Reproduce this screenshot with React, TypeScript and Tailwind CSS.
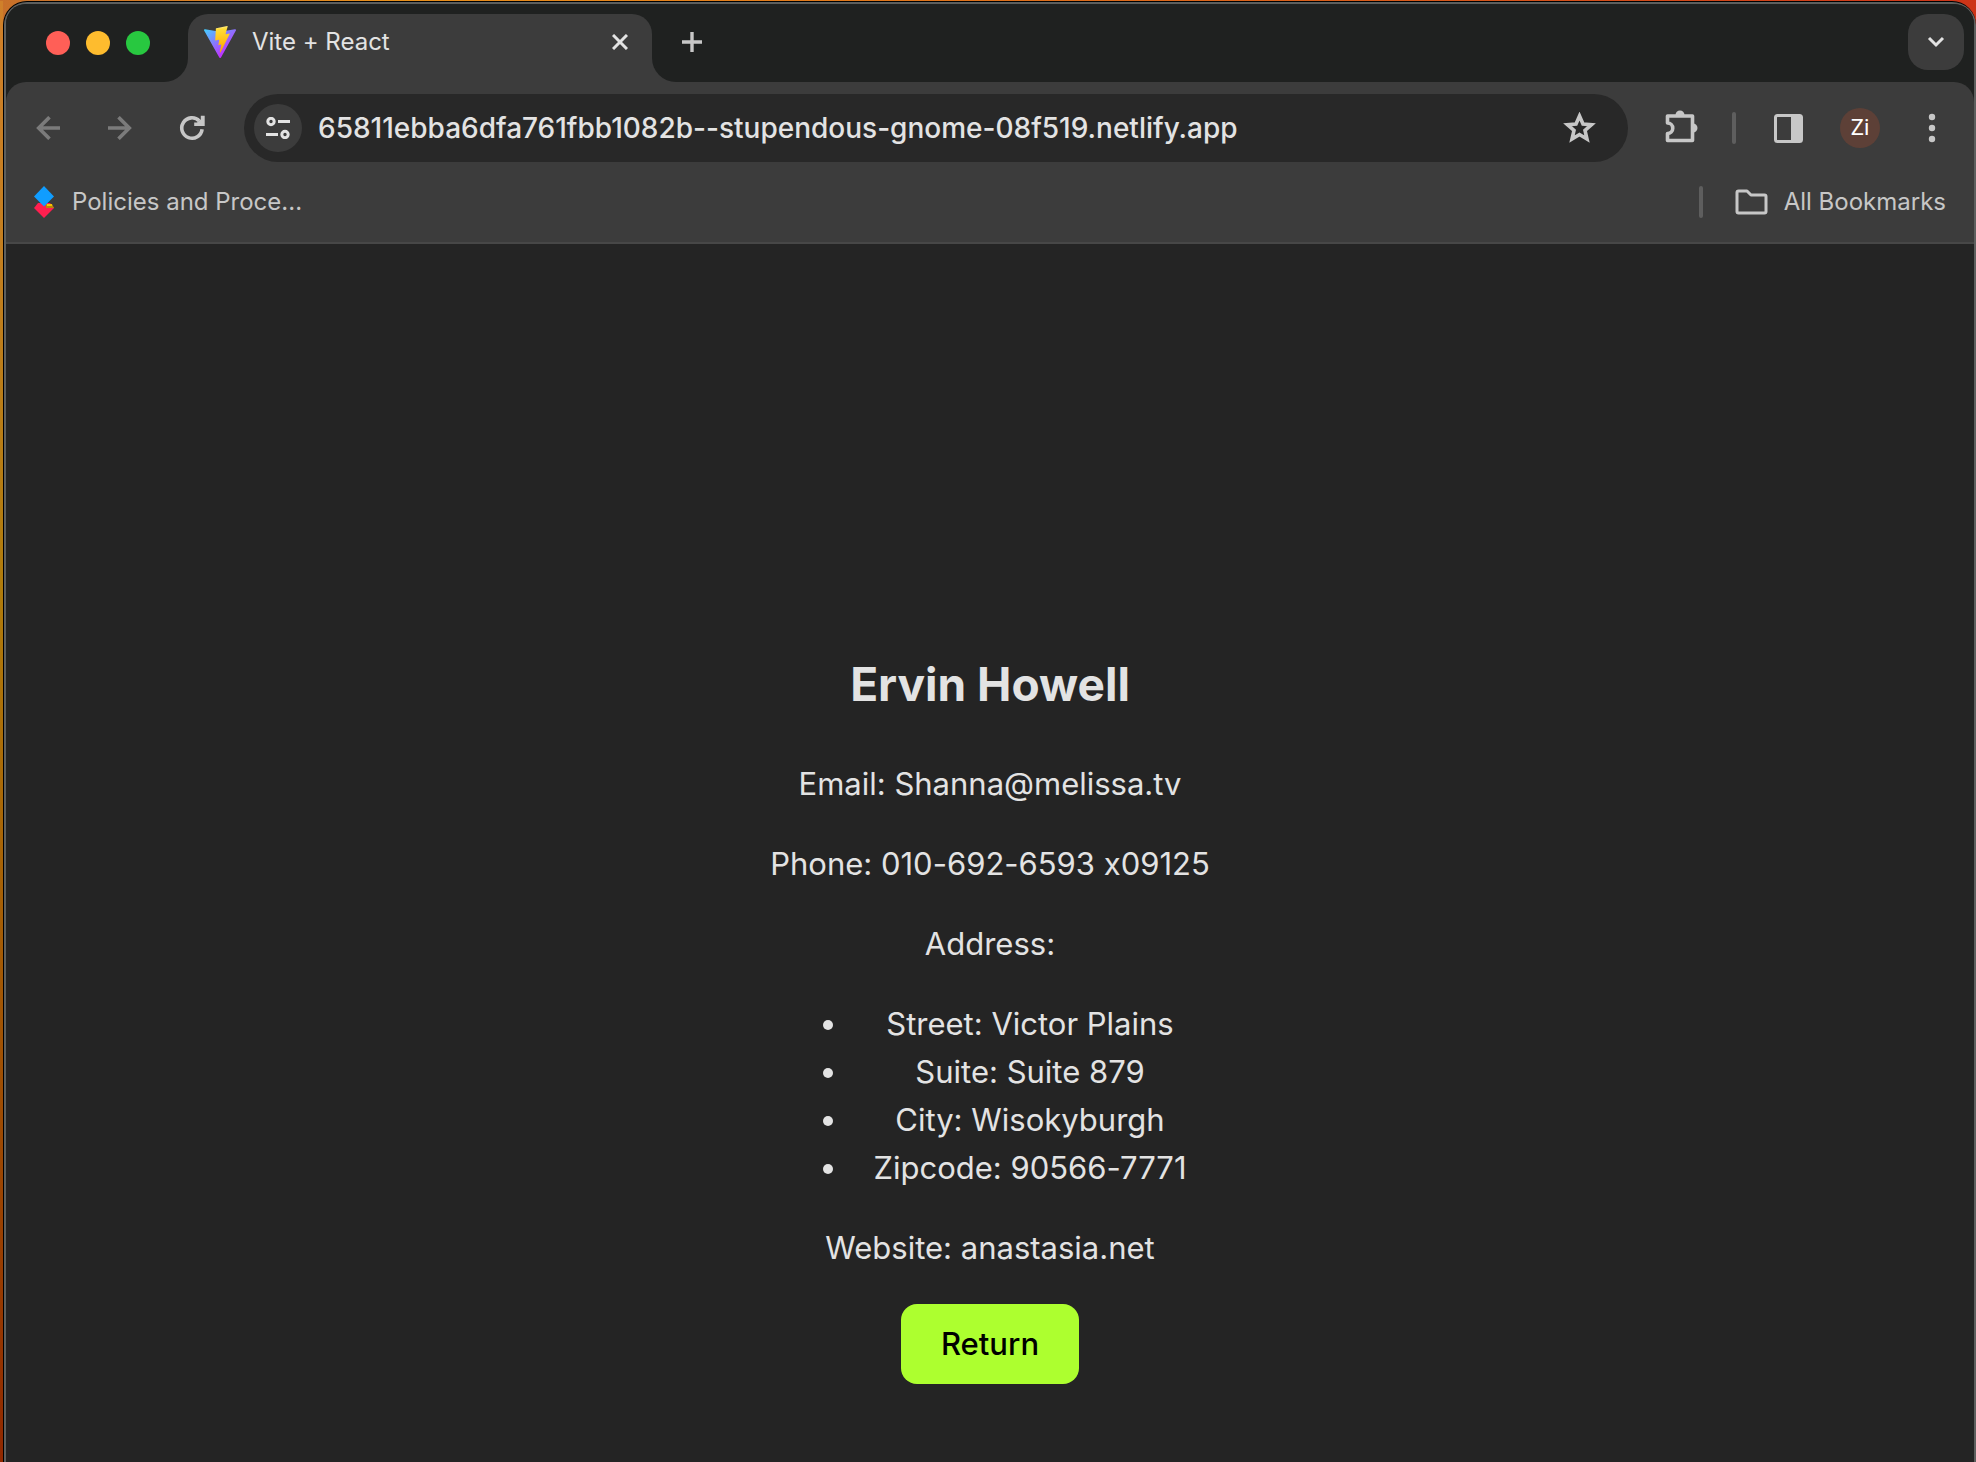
import React from "react";

const details = ["Email: Shanna@melissa.tv", "Phone: 010-692-6593 x09125", "Address:"];
const address = ["Street: Victor Plains", "Suite: Suite 879", "City: Wisokyburgh", "Zipcode: 90566-7771"];

function ViteLogo() {
  return (
    <svg width="32" height="32" viewBox="0 0 32 32" aria-hidden="true">
      <defs>
        <linearGradient id="vite-v" x1="0" y1="3" x2="19" y2="28" gradientUnits="userSpaceOnUse">
          <stop offset="0" stopColor="#41d1ff" />
          <stop offset="1" stopColor="#bd34fe" />
        </linearGradient>
        <linearGradient id="vite-bolt" x1="16" y1="1" x2="19" y2="24" gradientUnits="userSpaceOnUse">
          <stop offset="0" stopColor="#ffea83" />
          <stop offset="0.1" stopColor="#ffdd35" />
          <stop offset="1" stopColor="#ffa800" />
        </linearGradient>
      </defs>
      <path
        fill="url(#vite-v)"
        d="M31.9 4.6 17 31.4a1 1 0 0 1-1.7 0L.1 4.6A1 1 0 0 1 1.100 3.150L16 5.800 30.900 3.150A1 1 0 0 1 31.900 4.600Z"
      />
      <path
        fill="url(#vite-bolt)"
        d="M23.200.05 12.200 2.200a.4.4 0 0 0-.33.37L11.200 14a.4.4 0 0 0 .5.420l3.060-.7a.4.4 0 0 1 .48.480l-.9 4.450a.4.4 0 0 0 .51.470l1.900-.58a.4.4 0 0 1 .51.470l-1.450 7c-.09.430.5.670.73.300L16.700 26l9-17.900a.4.4 0 0 0-.44-.58l-3.160.61a.4.4 0 0 1-.46-.51L23.700.550a.4.4 0 0 0-.5-.5Z"
      />
    </svg>
  );
}

function TabStrip() {
  return (
    <div className="flex h-[78px] shrink-0 items-end bg-[#1f2120]">
      <div className="flex h-[78px] w-[158px] items-center gap-4 pl-10">
        <button aria-label="Close window" className="size-6 rounded-full bg-[#ff5f57]" />
        <button aria-label="Minimize window" className="size-6 rounded-full bg-[#febc2e]" />
        <button aria-label="Zoom window" className="size-6 rounded-full bg-[#28c840]" />
      </div>
      <div className="size-6 bg-[#3c3c3c]">
        <div className="size-6 rounded-br-3xl bg-[#1f2120]" />
      </div>
      <div className="flex h-[68px] w-[464px] items-start rounded-t-[20px] bg-[#3c3c3c] pr-6 pl-4">
        <div className="flex h-14 flex-1 items-center gap-4">
          <ViteLogo />
          <span className="text-2xl leading-8 text-[#e3e3e3]">Vite + React</span>
        </div>
        <button aria-label="Close tab" className="flex h-14 items-center">
          <svg width="16" height="16" viewBox="0 0 16 16" stroke="#e3e3e3" strokeWidth="3" aria-hidden="true">
            <path d="M1 1 15 15M15 1 1 15" />
          </svg>
        </button>
      </div>
      <div className="size-6 bg-[#3c3c3c]">
        <div className="size-6 rounded-bl-3xl bg-[#1f2120]" />
      </div>
      <button aria-label="New tab" className="flex h-[68px] items-start pt-[18px] pl-[6px]">
        <svg width="20" height="20" viewBox="0 0 20 20" stroke="#c7c7c7" strokeWidth="3.400" aria-hidden="true">
          <path d="M10 0V20M0 10H20" />
        </svg>
      </button>
      <div className="flex h-[68px] flex-1 items-start justify-end pr-[10px]">
        <button aria-label="Search tabs" className="flex size-14 items-center justify-center rounded-[20px] bg-[#3c3c3c]">
          <svg width="18" height="12" viewBox="0 0 18 12" fill="none" stroke="#e3e3e3" strokeWidth="3" aria-hidden="true">
            <path d="M2 2 9 9 16 2" />
          </svg>
        </button>
      </div>
    </div>
  );
}

function Toolbar() {
  return (
    <div className="bg-[#1f2120]">
      <div className="flex h-[92px] items-center rounded-t-[20px] bg-[#3c3c3c] pr-[38px] pl-[30px]">
        <button aria-label="Back">
          <svg width="24" height="24" viewBox="0 0 24 24" fill="none" stroke="#7b7b7b" strokeWidth="3.600" aria-hidden="true">
            <path d="M13.500 1.200 2.700 12 13.500 22.800M2.700 12H24" />
          </svg>
        </button>
        <button aria-label="Forward" className="ml-12">
          <svg width="24" height="24" viewBox="0 0 24 24" fill="none" stroke="#7b7b7b" strokeWidth="3.600" aria-hidden="true">
            <path d="M10.500 1.200 21.300 12 10.500 22.800M21.300 12H0" />
          </svg>
        </button>
        <button aria-label="Reload" className="ml-[47px]">
          <svg width="26" height="26" viewBox="0 0 26 26" fill="none" stroke="#c7c7c7" strokeWidth="3.600" aria-hidden="true">
            <path d="M23.100 14.200A10.200 10.200 0 1 1 20.300 5.900" />
            <path d="M25.700.8V11H15.200V7.600H18L21.800 4.500V.8Z" fill="#c7c7c7" stroke="none" />
          </svg>
        </button>
        <div className="ml-[39px] flex h-[68px] min-w-0 flex-1 items-center rounded-full bg-[#282828] pr-8 pl-[10px]">
          <button aria-label="View site information" className="flex size-12 shrink-0 items-center justify-center rounded-full bg-[#3c3c3c]">
            <svg width="24" height="22" viewBox="0 0 24 22" fill="none" stroke="#e3e3e3" strokeWidth="3" aria-hidden="true">
              <circle cx="5" cy="4.500" r="3.200" />
              <path d="M12 4.500H24M0 17.500H12" />
              <circle cx="19" cy="17.500" r="3.200" />
            </svg>
          </button>
          <input
            aria-label="Address"
            className="ml-4 min-w-0 flex-1 bg-transparent text-[28px] leading-9 font-medium text-[#e3e3e3] outline-none"
            defaultValue="65811ebba6dfa761fbb1082b--stupendous-gnome-08f519.netlify.app"
          />
          <button aria-label="Bookmark this tab">
            <svg width="33" height="32" viewBox="0 0 33 32" fill="none" stroke="#c7c7c7" strokeWidth="3.600" aria-hidden="true">
              <path d="M16.500 4 20 12 28.500 12.700 22 18.400 24 27 16.500 22.500 9 27 11 18.400 4.500 12.700 13 12Z" />
            </svg>
          </button>
        </div>
        <button aria-label="Extensions" className="ml-9">
          <svg width="36" height="36" viewBox="0 0 36 36" fill="none" stroke="#c7c7c7" strokeWidth="3.600" strokeLinejoin="round" aria-hidden="true">
            <path d="M3.500 6H28.500V30.500H3.500V23.500A5 5 0 0 0 3.500 13Z" />
            <path d="M11.500 5a4.500 4.500 0 0 1 9 0ZM29 13.500a4.500 4.500 0 0 1 0 9Z" fill="#c7c7c7" stroke="none" />
          </svg>
        </button>
        <div className="ml-8 h-8 w-1 rounded-full bg-[#5e5e5e]" />
        <button aria-label="Side panel" className="ml-[38px]">
          <svg width="29" height="29" viewBox="0 0 29 29" aria-hidden="true">
            <rect x="1.500" y="1.500" width="26" height="26" rx="2" fill="none" stroke="#c7c7c7" strokeWidth="3" />
            <path d="M17 1H27V28H17Z" fill="#c7c7c7" />
          </svg>
        </button>
        <button aria-label="Profile" className="ml-[37px] flex size-10 items-center justify-center rounded-full bg-[#5d4037] font-['Roboto',sans-serif] text-[22px] leading-6 text-white">
          Zi
        </button>
        <button aria-label="Menu" className="ml-12">
          <svg width="8" height="30" viewBox="0 0 8 30" fill="#c7c7c7" aria-hidden="true">
            <circle cx="4" cy="4" r="3.200" />
            <circle cx="4" cy="15" r="3.200" />
            <circle cx="4" cy="26" r="3.200" />
          </svg>
        </button>
      </div>
    </div>
  );
}

function BookmarksBar() {
  return (
    <div className="flex h-[70px] shrink-0 items-start justify-between border-b-2 border-[#474747] bg-[#3c3c3c] pt-3 pr-7 pl-7 text-2xl leading-8 text-[#c7c7c7]">
      <a href="#policies" className="flex items-center gap-[18px]">
        <svg width="20" height="32" viewBox="0 0 20 32" aria-hidden="true">
          <path d="M0 22 4 17H16L20 22 10 32Z" fill="#ff1f4f" />
          <path d="M12 18H18L20 22H12Z" fill="#b8860b" />
          <path d="M13 18H18V20H13Z" fill="#f5c400" />
          <path d="M10 0 20 10.500 10 20.500 0 10.500Z" fill="#109dff" />
        </svg>
        <span>Policies and Proce...</span>
      </a>
      <div className="flex items-center">
        <div className="h-8 w-1 rounded-full bg-[#5e5e5e]" />
        <button className="ml-8 flex items-center gap-4">
          <svg width="33" height="26" viewBox="0 0 33 26" fill="none" stroke="#c7c7c7" strokeWidth="3" strokeLinejoin="round" aria-hidden="true">
            <path d="M3.500 2H12L16 6H29.500Q31 6 31 7.500V22.500Q31 24 29.500 24H3.500Q2 24 2 22.500V3.500Q2 2 3.500 2Z" />
          </svg>
          <span>All Bookmarks</span>
        </button>
      </div>
    </div>
  );
}

export default function App() {
  return (
    <div className="flex min-h-screen bg-linear-to-r from-[#c8702a] via-[#e8901a] via-20% to-[#cc3418] pt-px font-['Inter',sans-serif] [font-feature-settings:'calt'_0]">
      <div className="w-[3px] shrink-0 bg-linear-to-b from-[#d0802a] via-[#b07c0c] via-40% to-[#902800]" />
      <div className="flex min-w-0 flex-1 flex-col overflow-hidden rounded-t-3xl border-t border-l border-black bg-[#5d5f5e] pt-[2px] pr-[2px] pl-[2px]">
        <div className="flex flex-1 flex-col overflow-hidden rounded-t-[20px] bg-[#242424]">
          <header>
            <TabStrip />
            <Toolbar />
            <BookmarksBar />
          </header>
          <main className="flex flex-1 flex-col items-center pt-[404px] pb-16 text-center text-[31px] leading-[48px] text-[#e3e3e3]">
            <section>
              <h1 className="mb-10 text-[46px] leading-[72px] font-bold">Ervin Howell</h1>
              {details.map((line) => (
                <p key={line} className="mb-8">
                  {line}
                </p>
              ))}
              <ul className="mb-8 list-disc pl-20">
                {address.map((line) => (
                  <li key={line}>{line}</li>
                ))}
              </ul>
              <p className="mb-8">Website: anastasia.net</p>
              <button className="h-20 rounded-2xl bg-[#adff2f] px-10 font-medium text-black">Return</button>
            </section>
          </main>
        </div>
      </div>
    </div>
  );
}
